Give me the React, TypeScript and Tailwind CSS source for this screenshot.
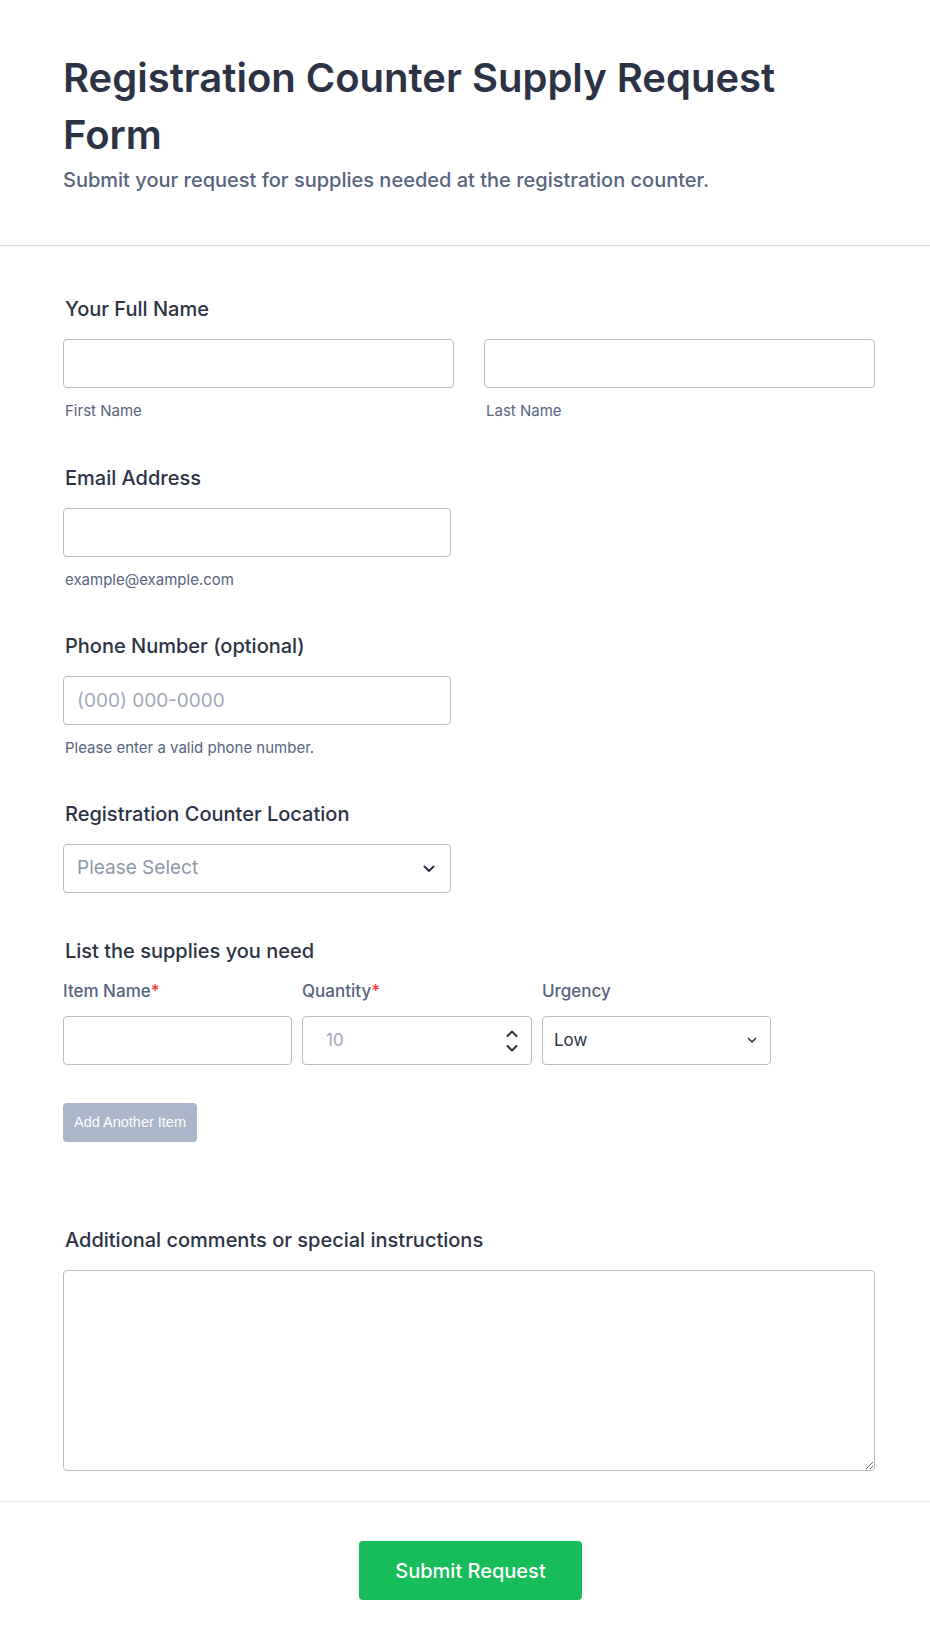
import React from 'react'

const font = { fontFamily: 'Inter, "Noto Sans", sans-serif' }

function Label({ children, className = '' }: { children: React.ReactNode; className?: string }) {
  return (
    <label className={`block pl-[2px] text-[20px] font-medium leading-[24px] text-[#2c3345] ${className}`}>
      {children}
    </label>
  )
}

function Sublabel({ children }: { children: React.ReactNode }) {
  return <p className="mt-[13px] pl-[2px] text-[15px] leading-[20px] text-[#57647e]">{children}</p>
}

function TextInput({ placeholder, className = '' }: { placeholder?: string; className?: string }) {
  return (
    <input
      type="text"
      placeholder={placeholder}
      className={`block h-[49px] rounded-[4px] border border-[#b8bdc9] bg-white px-[13px] text-[19px] text-[#2c3345] outline-none placeholder:text-[#a0a8b8] ${className}`}
    />
  )
}

function Chevron({ className = '' }: { className?: string }) {
  return (
    <svg width="12" height="8" viewBox="0 0 12 8" className={className} fill="none">
      <path d="M1.5 1.5L6 6L10.5 1.5" stroke="#2c3345" strokeWidth="2" strokeLinecap="round" strokeLinejoin="round" />
    </svg>
  )
}

export default function App() {
  return (
    <div className="min-h-[1649px] bg-white" style={font}>
      <header className="border-b border-[#d9dce3] px-[63px] pb-[51px] pt-[49px]">
        <h1 className="max-w-[760px] text-[40px] font-semibold leading-[57px] text-[#2c3345]">
          Registration Counter Supply Request Form
        </h1>
        <p className="mt-[4px] text-[20px] font-medium leading-[27px] text-[#57647e]">
          Submit your request for supplies needed at the registration counter.
        </p>
      </header>

      <form className="pl-[63px] pr-[55px] pt-[51px]" onSubmit={(e) => e.preventDefault()}>
        <div>
          <Label className="mb-[18px]">Your Full Name</Label>
          <div className="grid grid-cols-2 gap-[30px]">
            <div>
              <TextInput className="w-full" />
              <Sublabel>First Name</Sublabel>
            </div>
            <div>
              <TextInput className="w-full" />
              <Sublabel>Last Name</Sublabel>
            </div>
          </div>
        </div>

        <div className="mt-[45px]">
          <Label className="mb-[18px]">Email Address</Label>
          <TextInput className="w-[388px]" />
          <Sublabel>example@example.com</Sublabel>
        </div>

        <div className="mt-[44px]">
          <Label className="mb-[18px]">Phone Number (optional)</Label>
          <TextInput className="w-[388px]" placeholder="(000) 000-0000" />
          <Sublabel>Please enter a valid phone number.</Sublabel>
        </div>

        <div className="mt-[44px]">
          <Label className="mb-[18px]">Registration Counter Location</Label>
          <div className="flex h-[49px] w-[388px] items-center justify-between rounded-[4px] border border-[#b8bdc9] pl-[13px] pr-[15px]">
            <span className="text-[19px] text-[#8f97a8]">Please Select</span>
            <Chevron />
          </div>
        </div>

        <div className="mt-[46px]">
          <Label className="mb-[16px]">List the supplies you need</Label>
          <div className="flex gap-[10px]">
            <div className="w-[229px]">
              <p className="mb-[13px] text-[17px] font-medium leading-[24px] text-[#57647e]">
                Item Name<span className="text-[#f23a3c]">*</span>
              </p>
              <TextInput className="w-full" />
            </div>
            <div className="w-[230px]">
              <p className="mb-[13px] text-[17px] font-medium leading-[24px] text-[#57647e]">
                Quantity<span className="text-[#f23a3c]">*</span>
              </p>
              <div className="flex h-[49px] items-center justify-between rounded-[4px] border border-[#b8bdc9] pl-[23px] pr-[13px]">
                <span className="text-[17px] text-[#a0a8b8]">10</span>
                <svg width="12" height="26" viewBox="0 0 12 26" fill="none">
                  <path d="M1.5 8L6 3.5L10.5 8" stroke="#2c3345" strokeWidth="2" strokeLinecap="round" strokeLinejoin="round" />
                  <path d="M1.5 18L6 22.5L10.5 18" stroke="#2c3345" strokeWidth="2" strokeLinecap="round" strokeLinejoin="round" />
                </svg>
              </div>
            </div>
            <div className="w-[229px]">
              <p className="mb-[13px] text-[17px] font-medium leading-[24px] text-[#57647e]">Urgency</p>
              <div className="flex h-[49px] items-center justify-between rounded-[4px] border border-[#b8bdc9] pl-[11px] pr-[13px]">
                <span className="text-[17px] text-[#2c3345]">Low</span>
                <svg width="10" height="7" viewBox="0 0 10 7" fill="none">
                  <path d="M1.5 1.5L5 5L8.5 1.5" stroke="#2c3345" strokeWidth="1.6" strokeLinecap="round" strokeLinejoin="round" />
                </svg>
              </div>
            </div>
          </div>
          <button
            type="button"
            className="mt-[38px] h-[39px] w-[134px] rounded-[4px] bg-[#abb6cb] text-[14.5px] text-white"
            style={{ fontFamily: '"Liberation Sans", Arial, sans-serif' }}
          >
            Add Another Item
          </button>
        </div>

        <div className="mt-[86px]">
          <Label className="mb-[18px]">Additional comments or special instructions</Label>
          <textarea className="block h-[201px] w-full rounded-[4px] border border-[#b8bdc9] bg-white p-[12px] text-[16px] outline-none" />
        </div>
      </form>

      <div className="mt-[30px] flex justify-center border-t border-[#e6e8f2] pl-[11px] pt-[39px]">
        <button
          type="button"
          className="h-[59px] w-[223px] rounded-[4px] bg-[#18bd5b] text-[20px] font-medium text-white"
        >
          Submit Request
        </button>
      </div>
    </div>
  )
}
